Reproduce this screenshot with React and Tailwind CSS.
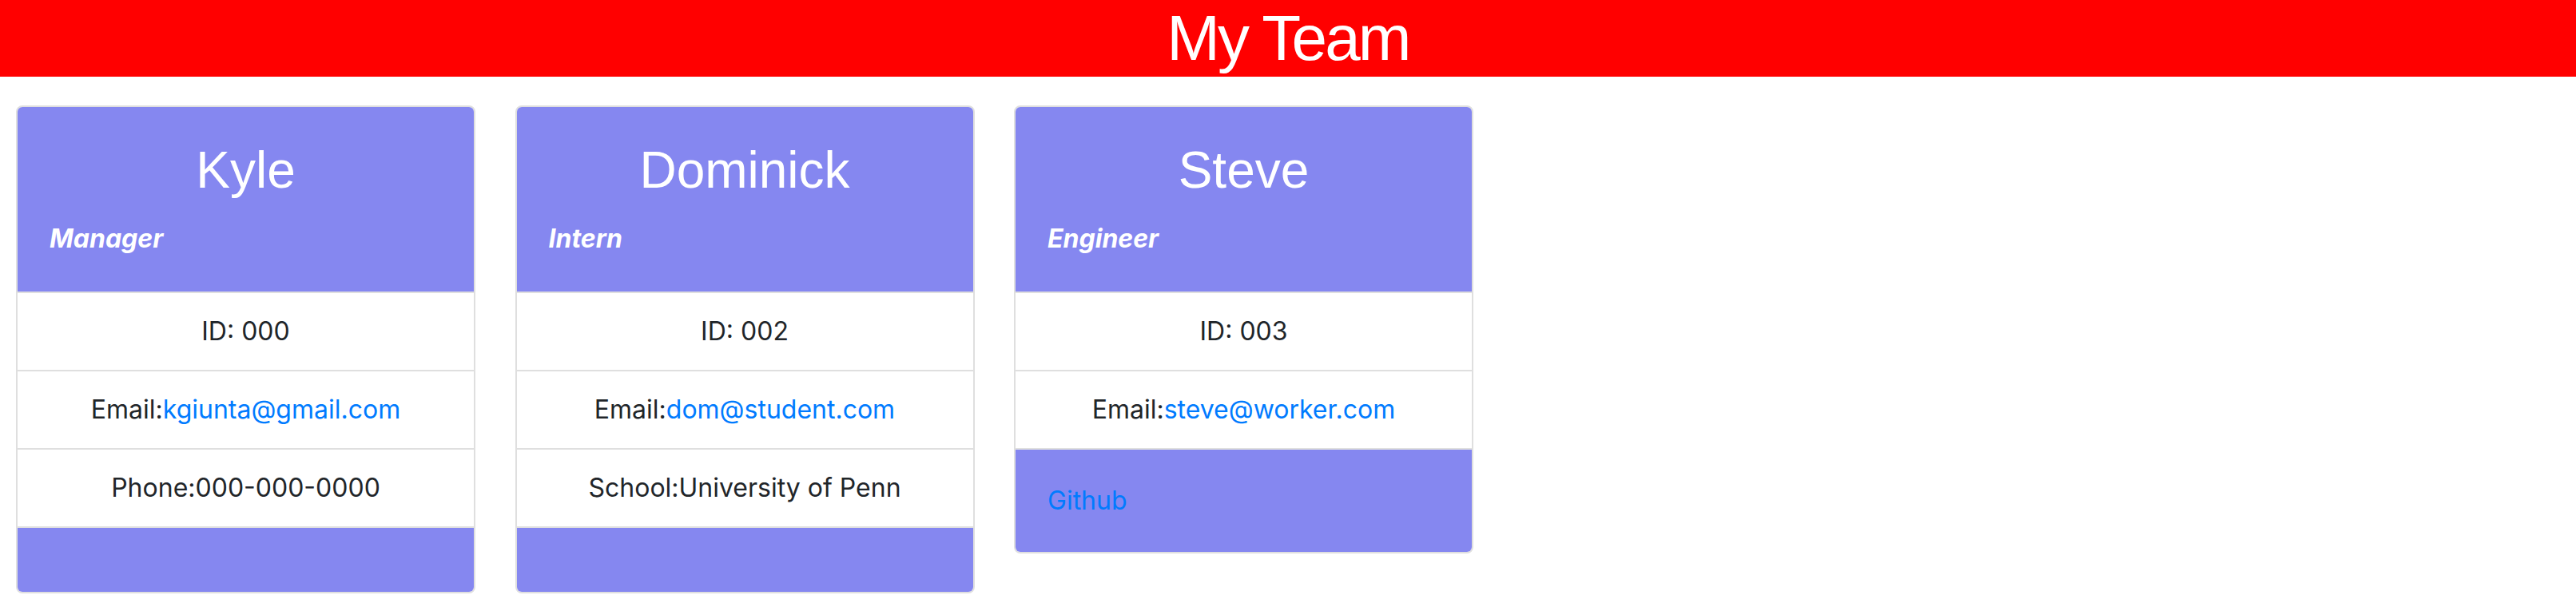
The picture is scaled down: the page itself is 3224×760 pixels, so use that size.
const team = [
  {
    name: "Kyle",
    role: "Manager",
    id: "000",
    email: "kgiunta@gmail.com",
    extra: { label: "Phone:", value: "000-000-0000" },
  },
  {
    name: "Dominick",
    role: "Intern",
    id: "002",
    email: "dom@student.com",
    extra: { label: "School:", value: "University of Penn" },
  },
  {
    name: "Steve",
    role: "Engineer",
    id: "003",
    email: "steve@worker.com",
    github: true,
  },
];

const MemberCard = ({ member }) => {
  return (
    <div className="w-[575px] flex flex-col border-2 border-[#dfdfdf] rounded-[8px] overflow-hidden bg-white">
      <div className="bg-[#8587f0] px-[40px] pt-[41px] pb-[47px] text-white">
        <h2 className="text-center text-[64px] leading-[1.2] font-normal font-['Liberation_Sans',sans-serif] mb-[28px]">
          {member.name}
        </h2>
        <h6 className="text-[32px] leading-[1.2] font-bold italic">{member.role}</h6>
      </div>

      <div className="border-t-2 border-[#dfdfdf] px-[40px] py-[24px] text-center text-[32px] leading-[48px] text-[#212529]">
        ID: {member.id}
      </div>
      <div className="border-t-2 border-[#dfdfdf] px-[40px] py-[24px] text-center text-[32px] leading-[48px] text-[#212529]">
        Email:<a className="text-[#007bff]">{member.email}</a>
      </div>
      {member.extra && (
        <div className="border-t-2 border-[#dfdfdf] px-[40px] py-[24px] text-center text-[32px] leading-[48px] text-[#212529]">
          {member.extra.label}
          {member.extra.value}
        </div>
      )}

      {/* footer: empty for manager/intern, github link for engineer */}
      <div className="border-t-2 border-[#dfdfdf] bg-[#8587f0] p-[40px] text-[32px] leading-[48px]">
        {member.github && <a className="text-[#007bff]">Github</a>}
      </div>
    </div>
  );
};

export default function App() {
  return (
    <div className="min-h-screen bg-white font-['Inter','Liberation_Sans',sans-serif]">
      <header className="bg-[#ff0000]">
        <h1 className="text-center text-white text-[80px] leading-[96px] font-normal font-['Liberation_Sans',sans-serif] tracking-[-0.035em]">
          My Team
        </h1>
      </header>

      <main className="flex items-start gap-[49.5px] pl-[20px] pt-[36px]">
        {team.map((member) => (
          <MemberCard key={member.id} member={member} />
        ))}
      </main>
    </div>
  );
}
